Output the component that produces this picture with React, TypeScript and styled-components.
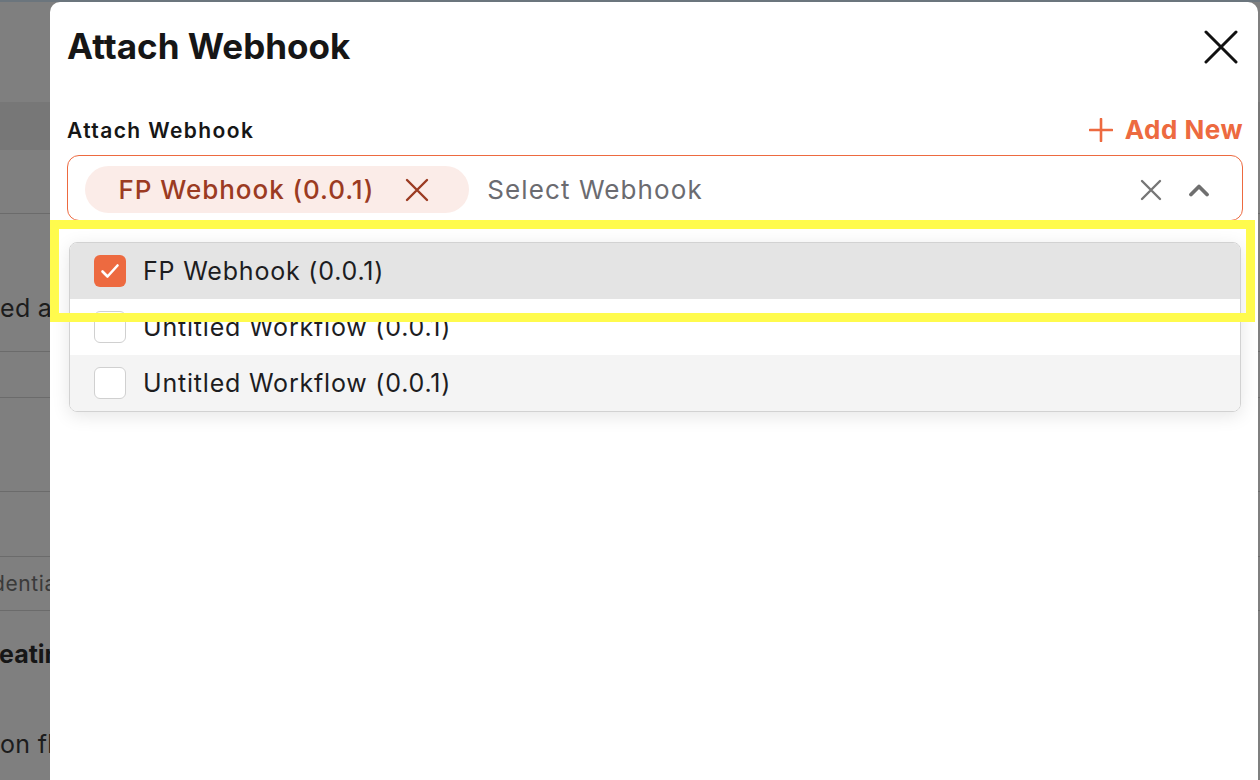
import React from "react";
import styled, { createGlobalStyle } from "styled-components";

const GlobalStyle = createGlobalStyle`
  * { box-sizing: border-box; }
  body {
    margin: 0;
    font-family: Inter, "Noto Sans", "Liberation Sans", sans-serif;
    background: #7f7f7f;
    overflow: hidden;
  }
`;

const ORANGE = "#ed6a40";

const options = [
  { label: "FP Webhook (0.0.1)", checked: true, shade: "#e4e4e4" },
  { label: "Untitled Workflow (0.0.1)", checked: false, shade: "#ffffff" },
  { label: "Untitled Workflow (0.0.1)", checked: false, shade: "#f4f4f4" },
];

const App = () => {
  return (
    <>
      <GlobalStyle />
      <Page>
        <TopStrip />
        <BgRow $h={100} />
        <BgRow $h={48} $shade="#777777" />
        <BgRow $h={64} $line />
        <BgRow $h={138} $line $align="flex-end" $pb={30}>
          <BgText>ed and configured</BgText>
        </BgRow>
        <BgRow $h={46} $line />
        <BgRow $h={94} $line />
        <BgRow $h={65} $line />
        <BgRow $h={54} $line $align="center">
          <BgSmall>dentials</BgSmall>
        </BgRow>
        <BgTail>
          <BgStrong>eating flows</BgStrong>
          <BgText>on flow</BgText>
        </BgTail>
      </Page>

      <Modal>
        <Header>
          <Title>Attach Webhook</Title>
          <CloseButton>
            <svg width="34" height="34" viewBox="0 0 34 34">
              <path d="M2 2 L32 32 M32 2 L2 32" stroke="#111" strokeWidth="3" strokeLinecap="round" />
            </svg>
          </CloseButton>
        </Header>

        <FieldHead>
          <Label>Attach Webhook</Label>
          <AddNew>
            <svg width="24" height="24" viewBox="0 0 24 24">
              <path d="M12 1 V23 M1 12 H23" stroke={ORANGE} strokeWidth="2.6" strokeLinecap="round" />
            </svg>
            Add New
          </AddNew>
        </FieldHead>

        <SelectBox>
          <Chip>
            <ChipText>FP Webhook (0.0.1)</ChipText>
            <svg width="24" height="24" viewBox="0 0 24 24">
              <path d="M2 2 L22 22 M22 2 L2 22" stroke="#9b3b22" strokeWidth="2.4" strokeLinecap="round" />
            </svg>
          </Chip>
          <Placeholder>Select Webhook</Placeholder>
          <BoxIcons>
            <svg width="22" height="22" viewBox="0 0 22 22">
              <path d="M2 2 L20 20 M20 2 L2 20" stroke="#767676" strokeWidth="2.4" strokeLinecap="round" />
            </svg>
            <svg width="22" height="14" viewBox="0 0 22 14">
              <path d="M3 11.5 L11 3.5 L19 11.5" stroke="#6f6f6f" strokeWidth="3.8" strokeLinecap="round" strokeLinejoin="round" fill="none" />
            </svg>
          </BoxIcons>
        </SelectBox>

        <Dropdown>
          {options.map((o, i) => (
            <Option key={i} $shade={o.shade}>
              <Check $checked={o.checked}>
                {o.checked && (
                  <svg width="32" height="32" viewBox="0 0 32 32">
                    <path d="M8.5 16.5 L13.5 21.5 L23.5 10.5" stroke="#fff" strokeWidth="2.6" strokeLinecap="round" strokeLinejoin="round" fill="none" />
                  </svg>
                )}
              </Check>
              <OptionText>{o.label}</OptionText>
            </Option>
          ))}
        </Dropdown>
      </Modal>

      <Highlight />
    </>
  );
};

export default App;

const Page = styled.div`
  width: 100%;
  height: 780px;
  display: flex;
  flex-direction: column;
  overflow: hidden;
  background: #7f7f7f;
`;

const TopStrip = styled.div`
  height: 2px;
  background: #6b757d;
`;

const BgRow = styled.div<{ $h: number; $shade?: string; $line?: boolean; $align?: string; $pb?: number }>`
  height: ${(p) => p.$h}px;
  flex-shrink: 0;
  display: flex;
  align-items: ${(p) => p.$align || "flex-start"};
  padding-bottom: ${(p) => p.$pb || 0}px;
  background: ${(p) => p.$shade || "#7f7f7f"};
  border-bottom: ${(p) => (p.$line ? "1.5px solid #6b6b6b" : "none")};
`;

const BgText = styled.div`
  font-size: 25px;
  line-height: 25px;
  letter-spacing: 0.3px;
  color: #1c1c1c;
  white-space: nowrap;
`;

const BgSmall = styled.div`
  font-size: 21px;
  line-height: 21px;
  letter-spacing: 0.6px;
  color: #3a3a3a;
  margin-left: -8px;
  white-space: nowrap;
`;

const BgStrong = styled.div`
  font-size: 25px;
  line-height: 25px;
  font-weight: 700;
  color: #161616;
  margin-left: -1px;
  white-space: nowrap;
`;

const BgTail = styled.div`
  display: flex;
  flex-direction: column;
  gap: 65px;
  padding-top: 31px;
`;

const Modal = styled.div`
  position: fixed;
  left: 50px;
  top: 2px;
  width: 1208px;
  bottom: 0;
  background: #ffffff;
  border-radius: 10px 10px 0 0;
  padding: 0 15px 0 17px;
  display: flex;
  flex-direction: column;
`;

const Header = styled.div`
  height: 88px;
  display: flex;
  align-items: center;
  justify-content: space-between;
`;

const Title = styled.h1`
  margin: 0;
  font-size: 35px;
  line-height: 1;
  font-weight: 700;
  color: #161616;
`;

const CloseButton = styled.div`
  display: flex;
  margin-right: 5px;
  margin-top: 2px;
`;

const FieldHead = styled.div`
  height: 28px;
  margin-top: 26px;
  display: flex;
  align-items: center;
  justify-content: space-between;
`;

const Label = styled.div`
  font-size: 21px;
  line-height: 1;
  font-weight: 600;
  letter-spacing: 1.4px;
  color: #161616;
`;

const AddNew = styled.div`
  display: flex;
  align-items: center;
  gap: 12px;
  font-size: 26px;
  line-height: 1;
  font-weight: 700;
  letter-spacing: 0.5px;
  color: ${ORANGE};
`;

const SelectBox = styled.div`
  margin-top: 11px;
  height: 66px;
  border: 1.5px solid ${ORANGE};
  border-radius: 12px;
  display: flex;
  align-items: center;
  padding: 3px 32px 0 16.5px;
`;

const Chip = styled.div`
  height: 47px;
  display: flex;
  align-items: center;
  gap: 31px;
  padding: 0 40px 0 34px;
  border-radius: 24px;
  background: #fbece8;
`;

const ChipText = styled.span`
  font-size: 26px;
  font-weight: 500;
  letter-spacing: 0.95px;
  color: #9b3b22;
`;

const Placeholder = styled.span`
  margin-left: 18px;
  flex: 1;
  font-size: 26px;
  letter-spacing: 1.1px;
  color: #6b6b70;
`;

const BoxIcons = styled.div`
  display: flex;
  align-items: center;
  gap: 26px;
`;

const Dropdown = styled.div`
  margin: 21px 2px 0;
  border: 1px solid #d2d2d2;
  border-radius: 8px;
  overflow: hidden;
  box-shadow: 0 4px 18px rgba(0, 0, 0, 0.1);
`;

const Option = styled.div<{ $shade: string }>`
  height: 56px;
  display: flex;
  align-items: center;
  gap: 17px;
  padding-left: 24px;
  background: ${(p) => p.$shade};
`;

const Check = styled.div<{ $checked: boolean }>`
  width: 32px;
  height: 32px;
  border-radius: 6px;
  display: flex;
  background: ${(p) => (p.$checked ? ORANGE : "#fff")};
  border: ${(p) => (p.$checked ? "none" : "1.5px solid #d0d0d0")};
`;

const OptionText = styled.span`
  font-size: 25px;
  letter-spacing: 0.8px;
  color: #1d1d1f;
`;

const Highlight = styled.div`
  position: fixed;
  left: 50px;
  top: 220px;
  width: 1205px;
  height: 102px;
  border: 9px solid #fffb4d;
  pointer-events: none;
`;
